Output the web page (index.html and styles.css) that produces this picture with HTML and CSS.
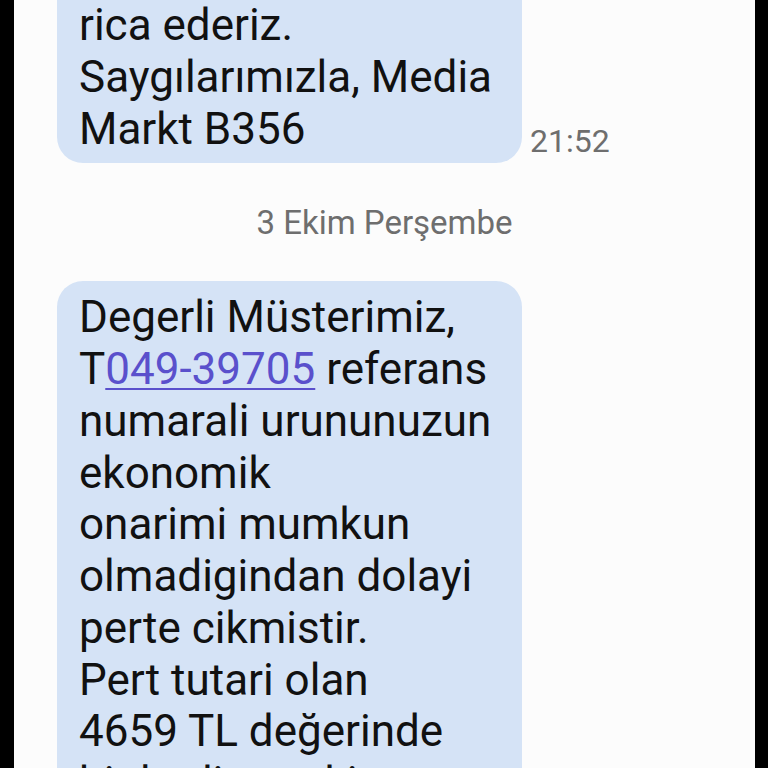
FILE: index.html
```html
<!DOCTYPE html>
<html>
    <head>
    <meta charset="utf-8">
    <link rel="stylesheet" href="styles.css">
    </head>
    <body>
    <div class="screen">
        <div class="thread">
            <div class="row">
                <div class="bubble cut">rica ederiz.<br>Saygılarımızla, Media<br>Markt B356</div>
                <div class="time">21:52</div>
            </div>

            <div class="date">3 Ekim Perşembe</div>

            <div class="row">
                <div class="bubble">Degerli Müsterimiz,<br>T<a href="#" class="link">049-39705</a> referans<br>numarali urununuzun<br>ekonomik<br>onarimi mumkun<br>olmadigindan dolayi<br>perte cikmistir.<br>Pert tutari olan<br>4659 TL değerinde<br>bir hediye ceki<br>tanimlanmistir.</div>
            </div>
        </div>
    </div>
    </body>
</html>
```

FILE: styles.css
```css
body
{
    margin: 0;
    background-color: #000;
}

.screen
{
    width: 741px;
    height: 768px;
    margin-left: 14px;
    background-color: #fcfcfc;
    overflow: hidden;
    font-family: Roboto, "Noto Sans", sans-serif;
}

.thread
{
    display: flex;
    flex-direction: column;
    padding-left: 43px;
}

.row
{
    display: flex;
    flex-direction: row;
    align-items: flex-end;
}

.bubble
{
    box-sizing: border-box;
    width: 465px;
    padding: 11px 22px 8px 22px;
    border-radius: 26px;
    background-color: #d5e3f6;
    color: #111;
    font-size: 44px;
    line-height: 51.75px;
    white-space: nowrap;
}

.bubble.cut
{
    padding-top: 0;
    border-top-left-radius: 0;
    border-top-right-radius: 0;
}

.link
{
    color: #5a50cc;
    text-decoration: underline;
    text-decoration-thickness: 2px;
    text-underline-offset: 4px;
}

.time
{
    margin-left: 8px;
    margin-bottom: 3px;
    color: #6e6e6e;
    font-size: 32px;
}

.date
{
    margin: 40px 0 39px -43px;
    text-align: center;
    color: #6e6e6e;
    font-size: 33px;
}
```
